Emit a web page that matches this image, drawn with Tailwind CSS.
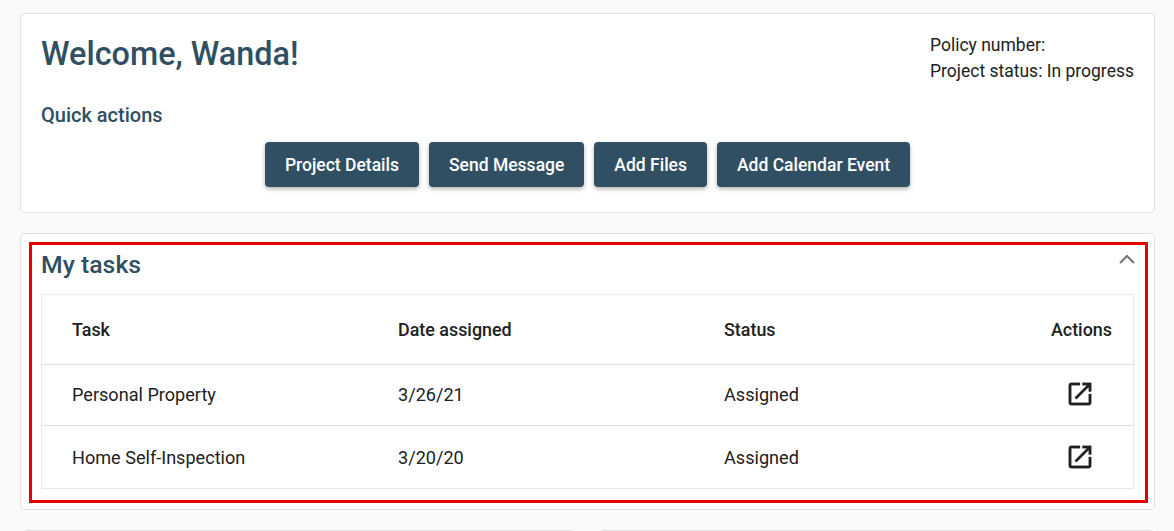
<!DOCTYPE html>
<html lang="en">
<head>
  <meta charset="UTF-8" />
  <meta name="viewport" content="width=device-width, initial-scale=1" />
  <title>Dashboard</title>
  <script src="https://cdn.jsdelivr.net/npm/@tailwindcss/browser@4"></script>
</head>
<body class="bg-[#fafafa] font-[Roboto,sans-serif] text-[#212121] h-[531px] overflow-hidden">
  <main class="pt-[13px] pl-[20px] pr-[19px] flex flex-col gap-[20px]">
    <!-- Welcome card -->
    <section class="h-[200px] bg-white border border-[#e0e0e0] rounded-[5px] pl-[20px] pr-[20px] relative">
      <div class="flex justify-between">
        <h1 class="text-[32.4px] leading-[38px] font-medium text-[#314f63] mt-[21px]">Welcome, Wanda!</h1>
        <div class="mt-[18px] text-[17.5px] leading-[26px] text-[#212121]">
          <p>Policy number:</p>
          <p>Project status: In progress</p>
        </div>
      </div>
      <h2 class="mt-[17px] text-[20px] leading-[28px] font-medium text-[#314f63]">Quick actions</h2>
      <div class="mt-[13px] flex justify-center gap-[10px]">
        <button class="h-[45px] px-[20px] pt-[2px] bg-[#314f63] text-white text-[17.5px] font-medium rounded-[4px] shadow-[0_2px_4px_rgba(0,0,0,0.3)]">Project Details</button>
        <button class="h-[45px] px-[20px] pt-[2px] bg-[#314f63] text-white text-[17.5px] font-medium rounded-[4px] shadow-[0_2px_4px_rgba(0,0,0,0.3)]">Send Message</button>
        <button class="h-[45px] px-[20px] pt-[2px] bg-[#314f63] text-white text-[17.5px] font-medium rounded-[4px] shadow-[0_2px_4px_rgba(0,0,0,0.3)]">Add Files</button>
        <button class="h-[45px] px-[20px] pt-[2px] bg-[#314f63] text-white text-[17.5px] font-medium rounded-[4px] shadow-[0_2px_4px_rgba(0,0,0,0.3)]">Add Calendar Event</button>
      </div>
    </section>

    <!-- Tasks card -->
    <section class="h-[277px] bg-white border border-[#e0e0e0] rounded-[5px] pl-[20px] pr-[20px] relative">
      <div class="flex justify-between h-[60px]">
        <h2 class="mt-[16px] text-[24.8px] leading-[30px] font-medium text-[#314f63]">My tasks</h2>
        <svg class="mt-[16px] mr-[-2px]" width="18" height="18" viewBox="0 0 18 18" fill="none" stroke="#757575" stroke-width="2"><path d="M2 13l7-7 7 7" /></svg>
      </div>
      <div class="border border-[#e8e8e8] text-[18.1px]">
        <div class="grid grid-cols-[326px_326px_1fr_83px] pl-[30px] pr-[21px] h-[70px] items-center font-medium border-b border-[#e0e0e0] text-[17.9px] pt-[2px]">
          <span>Task</span><span>Date assigned</span><span>Status</span><span class="text-right">Actions</span>
        </div>
        <div class="grid grid-cols-[326px_326px_1fr_83px] pl-[30px] pr-[21px] h-[61px] items-center border-b border-[#e0e0e0] pb-[1px]">
          <span>Personal Property</span><span>3/26/21</span><span>Assigned</span>
          <span class="flex justify-center pl-[19px] mt-[-2px]"><svg width="30" height="30" viewBox="0 0 24 24" fill="#212121" stroke="#212121" stroke-width="0.25"><path d="M19 19H5V5h7V3H5a2 2 0 0 0-2 2v14a2 2 0 0 0 2 2h14c1.1 0 2-.9 2-2v-7h-2v7zM14 3v2h3.59l-9.83 9.83 1.41 1.41L19 6.41V10h2V3h-7z" /></svg></span>
        </div>
        <div class="grid grid-cols-[326px_326px_1fr_83px] pl-[30px] pr-[21px] h-[62px] items-center pt-[1px]">
          <span>Home Self-Inspection</span><span>3/20/20</span><span>Assigned</span>
          <span class="flex justify-center pl-[19px] mt-[-1px]"><svg width="30" height="30" viewBox="0 0 24 24" fill="#212121" stroke="#212121" stroke-width="0.25"><path d="M19 19H5V5h7V3H5a2 2 0 0 0-2 2v14a2 2 0 0 0 2 2h14c1.1 0 2-.9 2-2v-7h-2v7zM14 3v2h3.59l-9.83 9.83 1.41 1.41L19 6.41V10h2V3h-7z" /></svg></span>
        </div>
      </div>
      <!-- highlight box -->
      <div class="absolute left-[8px] top-[8px] w-[1119px] h-[261px] border-[3px] border-[#e60000] pointer-events-none"></div>
    </section>

    <!-- Next row, cut off by the window -->
    <div class="flex gap-[23px] pl-[2px]">
      <div class="w-[553px] h-[60px] bg-white border border-[#e0e0e0] rounded-[5px]"></div>
      <div class="flex-1 h-[60px] bg-white border border-[#e0e0e0] rounded-[5px]"></div>
    </div>
  </main>
</body>
</html>
